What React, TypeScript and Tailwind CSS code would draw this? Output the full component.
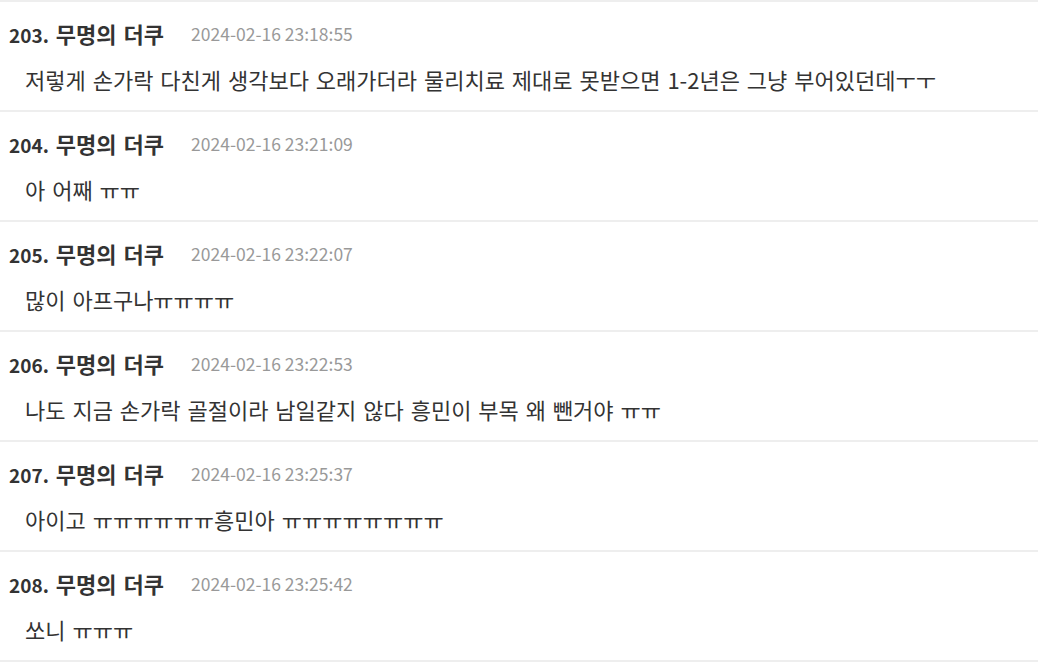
import React from "react";

const items = [
  { n: 203, t: "2024-02-16 23:18:55", b: "저렇게 손가락 다친게 생각보다 오래가더라 물리치료 제대로 못받으면 1-2년은 그냥 부어있던데ㅜㅜ" },
  { n: 204, t: "2024-02-16 23:21:09", b: "아 어째 ㅠㅠ" },
  { n: 205, t: "2024-02-16 23:22:07", b: "많이 아프구나ㅠㅠㅠㅠ" },
  { n: 206, t: "2024-02-16 23:22:53", b: "나도 지금 손가락 골절이라 남일같지 않다 흥민이 부목 왜 뺀거야 ㅠㅠ" },
  { n: 207, t: "2024-02-16 23:25:37", b: "아이고 ㅠㅠㅠㅠㅠㅠ흥민아 ㅠㅠㅠㅠㅠㅠㅠㅠ" },
  { n: 208, t: "2024-02-16 23:25:42", b: "쏘니 ㅠㅠㅠ" },
];

export default function App() {
  return (
    <div
      className="w-[1038px] h-[665px] bg-white overflow-hidden border-t-2 border-[#eeeeee]"
      style={{ fontFamily: '"Noto Sans CJK KR", "Noto Sans", sans-serif' }}
    >
      {items.map((it) => (
        <div key={it.n} className="h-[110px] border-b-2 border-[#eeeeee] pt-[20px] pl-[9px]">
          <div className="flex items-center h-[24px]">
            <span className="font-bold text-[#333333] leading-[24px] whitespace-nowrap">
              <span className="text-[19px]">{it.n}.</span>
              <span className="text-[22px] [word-spacing:2px]"> 무명의 더쿠</span>
            </span>
            <span className="ml-[27px] text-[17.5px] text-[#999999] leading-[24px] whitespace-nowrap">{it.t}</span>
          </div>
          <div className="mt-[19px] ml-[16px] h-[28px] text-[22px] text-[#333333] leading-[28px] whitespace-nowrap [word-spacing:2px]">
            {it.b}
          </div>
        </div>
      ))}
    </div>
  );
}
